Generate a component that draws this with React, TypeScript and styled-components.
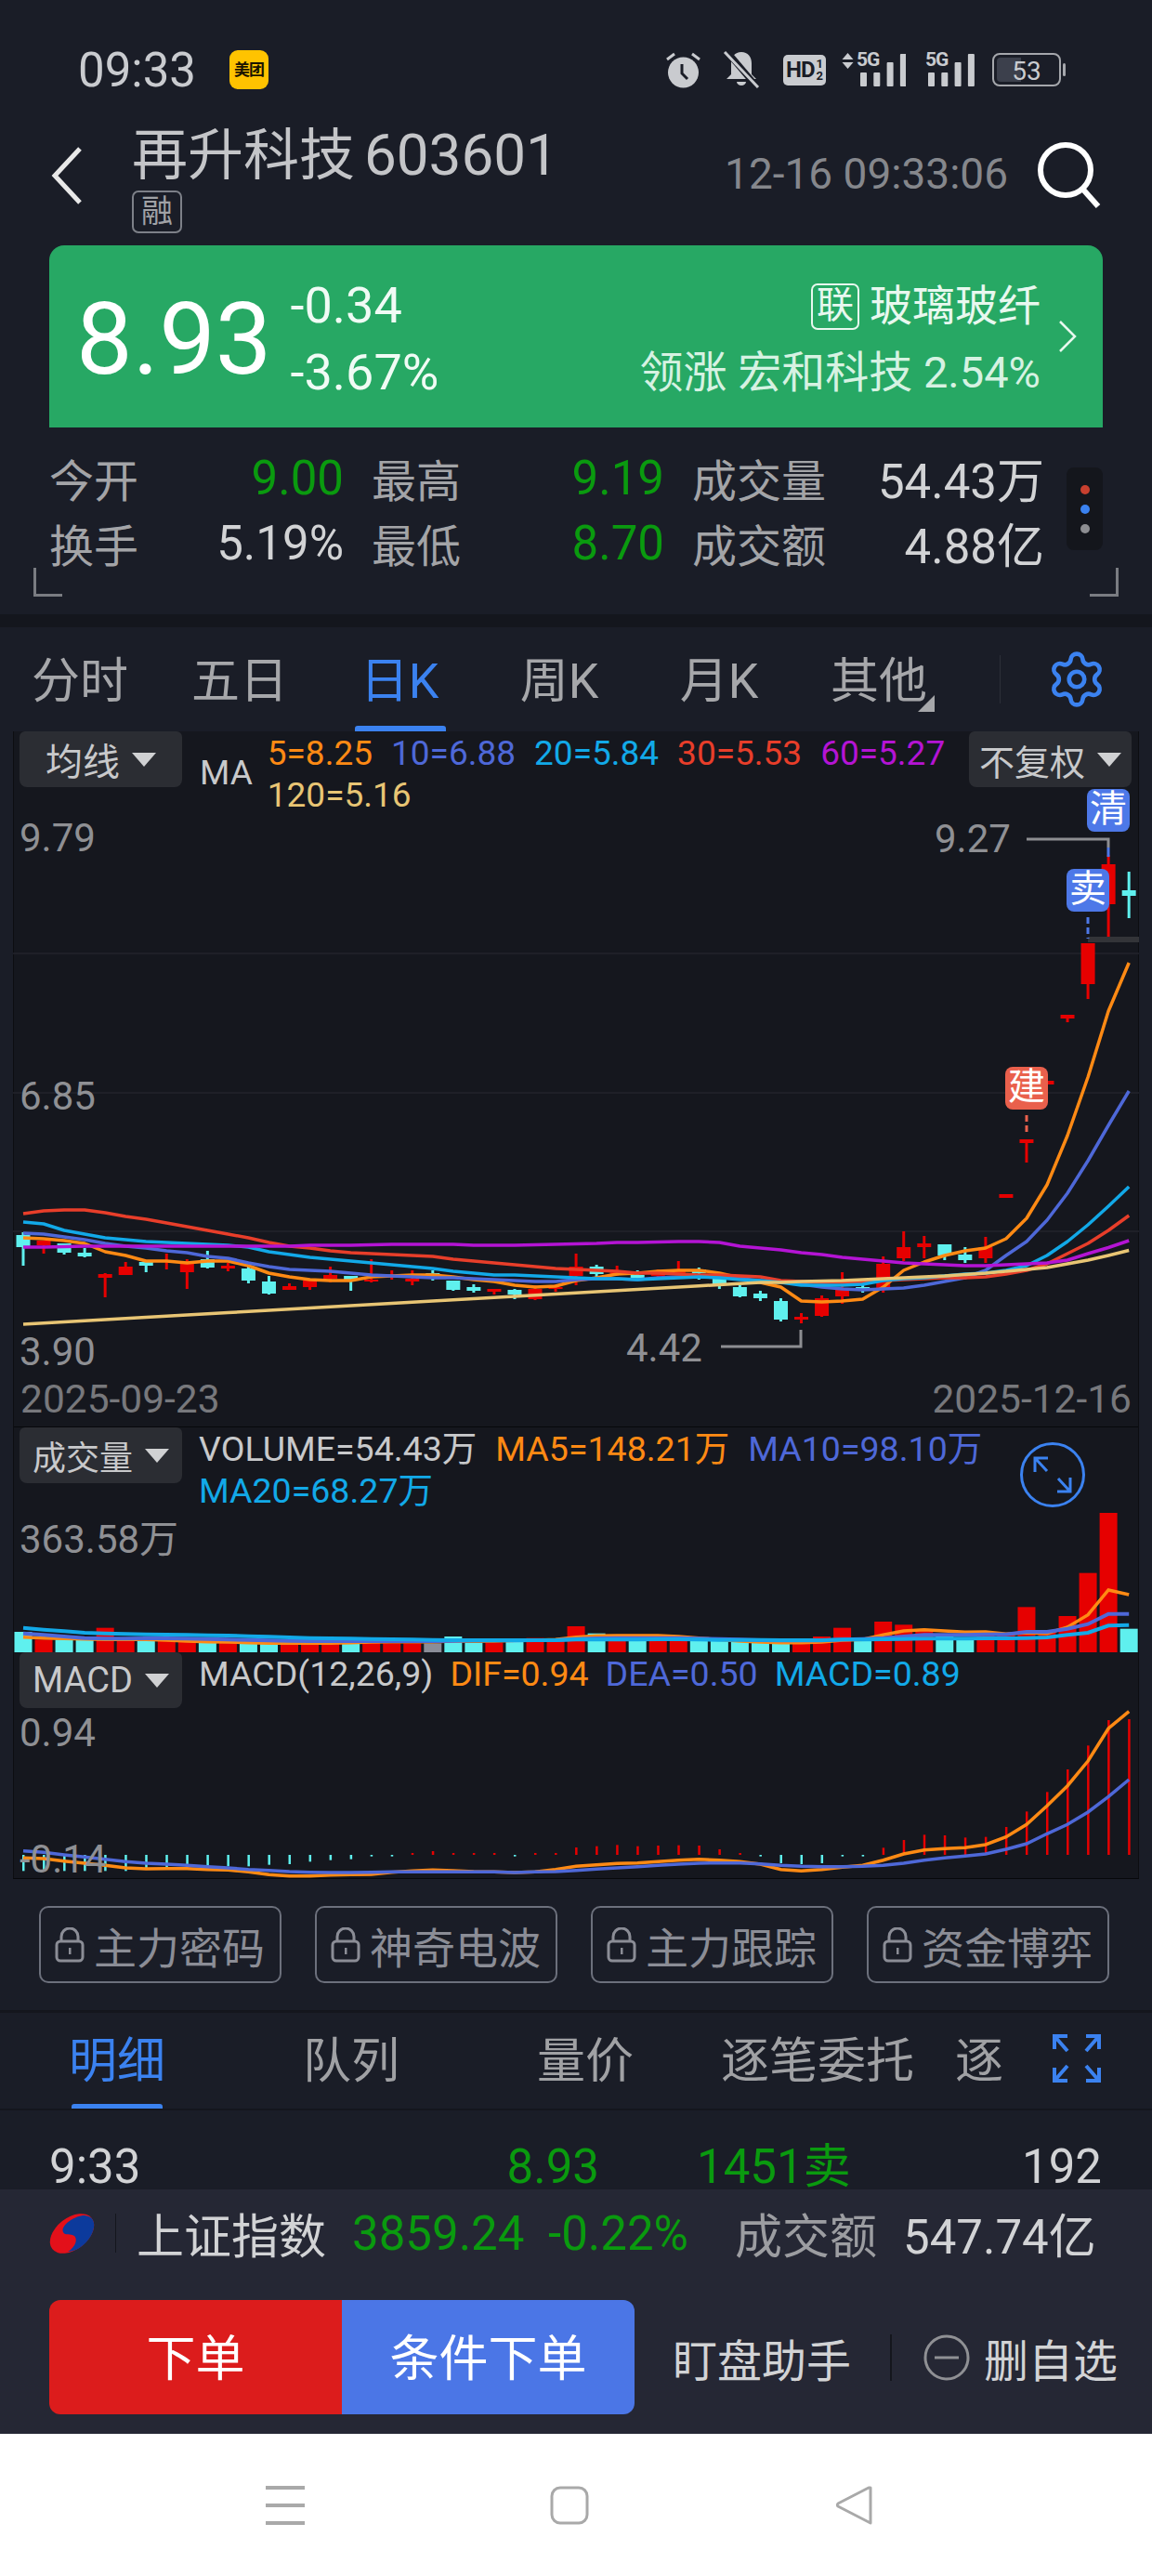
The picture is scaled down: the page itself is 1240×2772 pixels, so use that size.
import styled, { createGlobalStyle } from "styled-components";
import { Settings } from "lucide-react";

const GlobalStyle = createGlobalStyle`
  html, body {
    margin: 0;
    padding: 0;
    background: #1a1d27;
  }
  * {
    box-sizing: border-box;
  }
`;

const RED = "#e60000";
const CYAN = "#5ff0ee";
const BLUE = "#3b82f0";
const GREEN = "#0a9a0f";
const ICON = "#c9cbcf";

const Page = styled.div`
  width: 1240px;
  height: 2772px;
  overflow: hidden;
  display: flex;
  flex-direction: column;
  background: #1a1d27;
  color: #cfcfcf;
  font-family: Roboto, "Noto Sans CJK SC", sans-serif;
`;

/* status bar */
const StatusBar = styled.div`
  height: 134px;
  padding: 16px 94px 0 84px;
  display: flex;
  align-items: center;
`;

const Clock = styled.div`
  font-size: 51px;
  color: ${ICON};
`;

const AppBadge = styled.div`
  width: 42px;
  height: 42px;
  margin-left: 36px;
  border-radius: 9px;
  background: #ffc300;
  color: #1a1400;
  font-size: 17px;
  font-weight: 700;
  line-height: 42px;
  text-align: center;
  letter-spacing: -1px;
`;

const StatusIcons = styled.div`
  margin-left: auto;
  display: flex;
  align-items: center;
`;

const AlarmIcon = styled.svg`
  margin-right: 24px;
`;

const HdBadge = styled.div`
  width: 46px;
  height: 33px;
  margin: 0 17px 0 25px;
  border-radius: 5px;
  background: ${ICON};
  color: #1a1d27;
  font-size: 24px;
  font-weight: 700;
  display: flex;
  align-items: center;
  justify-content: center;
  letter-spacing: -1px;
`;

const HdFraction = styled.span`
  display: flex;
  flex-direction: column;
  align-items: center;
  margin-left: 2px;
  font-size: 13px;
  line-height: 13px;
  letter-spacing: 0;
`;

const SignalWrap = styled.div<{ $gap: number }>`
  position: relative;
  height: 36px;
  margin-right: ${(p) => p.$gap}px;
`;

const SignalLabel = styled.span<{ $left: number }>`
  position: absolute;
  left: ${(p) => p.$left}px;
  top: -4px;
  font-size: 21px;
  font-weight: 700;
  color: ${ICON};
  letter-spacing: -1px;
  line-height: 22px;
`;

const SignalArrows = styled.svg`
  position: absolute;
  left: 0;
  top: 0;
`;

const Battery = styled.div`
  position: relative;
  width: 74px;
  height: 36px;
  margin-right: 4px;
  border: 2.5px solid #a5a7ac;
  border-radius: 8px;
  padding: 3px;
  color: ${ICON};
  font-size: 28px;
  line-height: 30px;
  text-align: center;

  &::after {
    content: "";
    position: absolute;
    right: -7px;
    top: 9px;
    width: 3px;
    height: 14px;
    border-radius: 2px;
    background: #a5a7ac;
  }
`;

const BatteryFill = styled.div`
  position: absolute;
  left: 3px;
  top: 3px;
  bottom: 3px;
  width: 26px;
  border-radius: 4px 0 0 4px;
  background: #3c404c;
`;

const BatteryText = styled.span`
  position: relative;
`;

/* stock header */
const Header = styled.div`
  height: 130px;
  padding: 0 54px;
  display: flex;
  align-items: flex-start;
`;

const BackIcon = styled.svg`
  width: 36px;
  height: 66px;
  margin-top: 22px;
  flex: none;
`;

const TitleBlock = styled.div`
  margin-left: 52px;
`;

const Title = styled.div`
  font-size: 60px;
  line-height: 66px;
  color: #c4c5c8;
  white-space: nowrap;
  word-spacing: -5px;
`;

const TitleCode = styled.span`
  font-size: 62px;
`;

const MarginBadge = styled.div`
  width: 54px;
  height: 46px;
  margin-top: 4px;
  border: 2px solid #7d8088;
  border-radius: 7px;
  color: #a0a2a6;
  font-size: 34px;
  line-height: 40px;
  text-align: center;
`;

const HeaderRight = styled.div`
  margin-left: auto;
  margin-top: 16px;
  display: flex;
  align-items: center;
`;

const Timestamp = styled.div`
  font-size: 46px;
  color: #85878c;
  white-space: nowrap;
`;

const SearchIcon = styled.svg`
  width: 72px;
  height: 74px;
  margin-left: 29px;
`;

/* price card */
const PriceCard = styled.div`
  height: 196px;
  margin: 0 53px;
  padding: 6px 27px 0 29px;
  display: flex;
  align-items: center;
  background: #27a864;
  border-radius: 16px 16px 0 0;
  color: #fff;
`;

const PriceValue = styled.div`
  font-size: 108px;
  line-height: 1;
`;

const Deltas = styled.div`
  margin-left: 20px;
  font-size: 54px;
  line-height: 72px;
  color: #f0fbf5;
`;

const Sector = styled.div`
  margin-left: auto;
  text-align: right;
  font-size: 47px;
  line-height: 71px;
  color: #d6f2e2;
`;

const SectorTop = styled.div`
  display: flex;
  align-items: center;
  justify-content: flex-end;
  font-size: 46px;
  color: #e8f8ef;
`;

const SectorMark = styled.span`
  width: 52px;
  height: 50px;
  margin-right: 11px;
  border: 2px solid #e8f8ef;
  border-radius: 7px;
  font-size: 40px;
  line-height: 44px;
  text-align: center;
`;

const CardChevron = styled.svg`
  width: 22px;
  height: 36px;
  margin: -6px 0 0 18px;
  flex: none;
`;

/* quote stats */
const Stats = styled.div`
  position: relative;
  height: 201px;
  padding: 19px 0 0 53px;
`;

const StatsGrid = styled.div`
  display: grid;
  grid-template-columns: 100px 217px 125px 220px 180px 229px;
  grid-auto-rows: 70px;
  align-items: center;
  font-size: 48px;
`;

const StatLabel = styled.div<{ $indent?: number }>`
  color: #a3a4a7;
  padding-left: ${(p) => p.$indent ?? 0}px;
  white-space: nowrap;
`;

const StatValue = styled.div<{ $green?: boolean }>`
  text-align: right;
  font-size: 51px;
  white-space: nowrap;
  color: ${(p) => (p.$green ? GREEN : "#d2d3d5")};
`;

const DotsPill = styled.div`
  position: absolute;
  left: 1148px;
  top: 43px;
  width: 39px;
  height: 89px;
  border-radius: 8px;
  background: #14161c;
  display: flex;
  flex-direction: column;
  align-items: center;
  justify-content: center;
  gap: 11px;
`;

const Dot = styled.span<{ $color: string }>`
  width: 10px;
  height: 10px;
  border-radius: 50%;
  background: ${(p) => p.$color};
`;

const Bracket = styled.span<{ $right?: boolean }>`
  position: absolute;
  top: 151px;
  ${(p) => (p.$right ? "left: 1173px;" : "left: 36px;")}
  width: 31px;
  height: 31px;
  border-bottom: 3px solid #7a7c82;
  ${(p) => (p.$right ? "border-right: 3px solid #7a7c82;" : "border-left: 3px solid #7a7c82;")}
`;

const Band = styled.div`
  height: 14px;
  background: #14161d;
  flex: none;
`;

/* period tabs */
const PeriodBar = styled.div`
  height: 112px;
  display: flex;
  align-items: center;
  flex: none;
`;

const PeriodTab = styled.div<{ $active?: boolean }>`
  position: relative;
  width: 172px;
  height: 112px;
  font-size: 52px;
  line-height: 118px;
  text-align: center;
  color: ${(p) => (p.$active ? BLUE : "#a6a7aa")};

  &::after {
    content: "";
    display: ${(p) => (p.$active ? "block" : "none")};
    position: absolute;
    left: 38px;
    bottom: 0;
    width: 98px;
    height: 6px;
    border-radius: 3px 3px 0 0;
    background: ${BLUE};
  }
`;

const CornerMark = styled.span`
  position: absolute;
  right: 26px;
  bottom: 21px;
  width: 0;
  height: 0;
  border-left: 18px solid transparent;
  border-bottom: 18px solid #a6a7aa;
`;

const PeriodDivider = styled.div`
  width: 1px;
  height: 52px;
  margin-left: 44px;
  background: #2c2f38;
`;

const GearWrap = styled.div`
  margin-left: 49px;
  display: flex;
  color: ${BLUE};
`;

/* chart panel */
const ChartPanel = styled.div`
  width: 1212px;
  height: 1235px;
  margin-left: 14px;
  background: #15171e;
  border-left: 1px solid #0c0d11;
  border-right: 1px solid #0c0d11;
  border-bottom: 1px solid #07080b;
  flex: none;
`;

const Pane = styled.div<{ $h: number; $divider?: boolean }>`
  position: relative;
  height: ${(p) => p.$h}px;
  border-top: ${(p) => (p.$divider ? "1px solid #07080b" : "none")};
`;

const PaneSvg = styled.svg`
  position: absolute;
  left: -1px;
  top: 0;
`;

const LegendRow = styled.div`
  position: relative;
  display: flex;
  align-items: flex-start;
  padding: 0 7px 0 6px;
`;

const DropBtn = styled.div<{ $size?: number }>`
  width: 175px;
  height: 60px;
  flex: none;
  border-radius: 6px 6px 8px 8px;
  background: #2b2d33;
  color: #c8c9cb;
  font-size: ${(p) => p.$size ?? 38}px;
  display: flex;
  align-items: center;
  justify-content: center;
  gap: 13px;
  white-space: nowrap;
`;

const DropCaret = styled.span`
  width: 0;
  height: 0;
  flex: none;
  border-left: 13px solid transparent;
  border-right: 13px solid transparent;
  border-top: 15px solid #d0d1d3;
`;

const MaTag = styled.div`
  margin: 22px 0 0 19px;
  font-size: 37px;
  line-height: 45px;
  color: #c8c9cb;
`;

const LegendItems = styled.div<{ $w: number; $left: number; $size: number; $gap: number }>`
  width: ${(p) => p.$w}px;
  margin-left: ${(p) => p.$left}px;
  display: flex;
  flex-wrap: wrap;
  column-gap: ${(p) => p.$gap}px;
  font-size: ${(p) => p.$size}px;
  line-height: 45px;
  padding-top: 1px;
  white-space: nowrap;
`;

const LegendItem = styled.span<{ $color: string }>`
  color: ${(p) => p.$color};
`;

const RightBtn = styled(DropBtn)`
  margin-left: auto;
`;

const AxisLabel = styled.div<{ $x: number; $y: number }>`
  position: absolute;
  left: ${(p) => p.$x}px;
  top: ${(p) => p.$y}px;
  font-size: 42px;
  line-height: 40px;
  color: #8f9094;
  white-space: nowrap;
`;

const Tag = styled.div<{ $x: number; $y: number; $color: string }>`
  position: absolute;
  left: ${(p) => p.$x}px;
  top: ${(p) => p.$y}px;
  width: 46px;
  height: 46px;
  border-radius: 8px;
  background: ${(p) => p.$color};
  color: #fff;
  font-size: 40px;
  line-height: 44px;
  text-align: center;
`;

const DateRow = styled.div`
  height: 60px;
  padding: 0 7px;
  display: flex;
  justify-content: space-between;
  align-items: center;
  font-size: 42.5px;
  color: #77787c;
`;

const ZoomIcon = styled.svg`
  position: absolute;
  left: 1082px;
  top: 15px;
`;

/* feature buttons */
const Features = styled.div`
  height: 141px;
  padding: 29px 0 0 42px;
  display: grid;
  grid-template-columns: repeat(4, 261px);
  column-gap: 36px;
  flex: none;
`;

const FeatureBtn = styled.div`
  height: 83px;
  border: 2px solid #6c707c;
  border-radius: 10px;
  display: flex;
  align-items: center;
  padding-left: 15px;
  gap: 10px;
  color: #8b8d96;
  font-size: 46px;
  white-space: nowrap;
`;

const LockIcon = styled.svg`
  flex: none;
`;

/* detail tabs */
const DetailBar = styled.div`
  height: 108px;
  border-top: 3px solid #14161d;
  border-bottom: 2px solid #14161d;
  display: flex;
  align-items: center;
  flex: none;
`;

const DetailStrip = styled.div`
  width: 1078px;
  overflow: hidden;
  display: flex;
  flex: none;
`;

const DetailTab = styled.div<{ $active?: boolean; $shift?: number }>`
  position: relative;
  width: 252px;
  height: 103px;
  flex: none;
  font-size: 52px;
  line-height: 106px;
  text-align: center;
  white-space: nowrap;
  color: ${(p) => (p.$active ? BLUE : "#a0a1a4")};
  margin-left: ${(p) => p.$shift ?? 0}px;

  &::after {
    content: "";
    display: ${(p) => (p.$active ? "block" : "none")};
    position: absolute;
    left: 77px;
    bottom: 0;
    width: 98px;
    height: 5px;
    border-radius: 3px 3px 0 0;
    background: ${BLUE};
  }
`;

const ExpandIcon = styled.svg`
  margin-left: 55px;
  margin-top: -6px;
`;

const TradeRow = styled.div`
  height: 85px;
  flex: none;
  overflow: hidden;
  padding: 34px 54px 0 53px;
  display: flex;
  font-size: 51px;
  line-height: 54px;
  color: #d2d3d5;
`;

const TradeTime = styled.div`
  width: 302px;
`;

const TradePrice = styled.div`
  width: 290px;
  text-align: right;
  color: ${GREEN};
`;

const TradeVolume = styled.div`
  margin-left: 105px;
  color: ${GREEN};
  white-space: nowrap;
`;

const TradeCount = styled.div`
  margin-left: auto;
`;

/* bottom dock */
const Dock = styled.div`
  height: 263px;
  flex: none;
  background: #252734;
`;

const Ticker = styled.div`
  height: 92px;
  margin-top: 1px;
  padding-left: 53px;
  display: flex;
  align-items: center;
  font-size: 51px;
  white-space: nowrap;
`;

const TickerDivider = styled.span`
  width: 1px;
  height: 42px;
  margin: 0 22px 0 22px;
  background: #14161d;
`;

const TickerName = styled.span`
  color: #d2d3d5;
  width: 232px;
`;

const TickerChange = styled.span`
  color: ${GREEN};
  word-spacing: 13px;
`;

const TickerLabel = styled.span`
  color: #9c9da1;
  margin-left: 50px;
`;

const TickerAmount = styled.span`
  color: #d2d3d5;
  margin-left: 28px;
`;

const Actions = styled.div`
  margin-top: 26px;
  padding-left: 53px;
  display: flex;
  align-items: center;
`;

const OrderBtn = styled.div<{ $color: string; $side: "left" | "right" }>`
  width: 315px;
  height: 123px;
  background: ${(p) => p.$color};
  border-radius: ${(p) => (p.$side === "left" ? "12px 0 0 12px" : "0 12px 12px 0")};
  color: #fff;
  font-size: 53px;
  line-height: 129px;
  text-align: center;
  overflow: hidden;
`;

const ActionText = styled.div`
  font-size: 48px;
  color: #d2d3d5;
  white-space: nowrap;
`;

const HelperText = styled(ActionText)`
  margin-left: 41px;
`;

const ActionDivider = styled.div`
  width: 2px;
  height: 50px;
  margin: 0 34px 0 42px;
  background: #14161d;
`;

const MinusIcon = styled.svg`
  margin-right: 15px;
  flex: none;
`;

/* android nav */
const NavBar = styled.div`
  flex: 1;
  background: #fff;
  padding-right: 15px;
  display: flex;
  justify-content: center;
  align-items: center;
`;

const NavCell = styled.div`
  width: 306px;
  display: flex;
  justify-content: center;
`;

/* chart data */
const cx = (i: number) => 25 + 22.04 * i;

// [index, up?, wickTop, bodyTop, bodyBottom, wickBottom]
const candles: [number, boolean, number, number, number, number][] = [
  [0, false, 1326, 1329, 1342, 1362],
  [1, true, 1335, 1335, 1340, 1349],
  [2, false, 1338, 1338, 1348, 1350],
  [3, false, 1343, 1348, 1352, 1353],
  [4, true, 1370, 1371, 1375, 1396],
  [5, true, 1358, 1363, 1372, 1372],
  [6, false, 1358, 1358, 1362, 1369],
  [7, true, 1349, 1356, 1358, 1366],
  [8, true, 1355, 1358, 1369, 1387],
  [9, false, 1346, 1355, 1364, 1365],
  [10, true, 1359, 1362, 1365, 1368],
  [11, false, 1363, 1365, 1378, 1381],
  [12, false, 1373, 1379, 1392, 1393],
  [13, true, 1381, 1384, 1388, 1388],
  [14, true, 1378, 1378, 1385, 1388],
  [15, true, 1363, 1372, 1376, 1380],
  [16, false, 1373, 1373, 1377, 1389],
  [17, true, 1355, 1377, 1379, 1380],
  [18, true, 1367, 1372, 1374, 1377],
  [19, true, 1367, 1376, 1379, 1383],
  [20, false, 1367, 1370, 1375, 1378],
  [21, false, 1378, 1378, 1388, 1389],
  [22, false, 1382, 1385, 1389, 1391],
  [23, true, 1387, 1387, 1390, 1393],
  [24, false, 1387, 1388, 1393, 1398],
  [25, true, 1383, 1387, 1398, 1399],
  [26, true, 1382, 1385, 1387, 1390],
  [27, true, 1349, 1363, 1373, 1383],
  [28, false, 1361, 1363, 1371, 1374],
  [29, true, 1362, 1368, 1372, 1373],
  [30, false, 1367, 1372, 1375, 1378],
  [31, true, 1366, 1368, 1373, 1374],
  [32, true, 1357, 1367, 1370, 1370],
  [33, false, 1364, 1366, 1370, 1377],
  [34, false, 1376, 1376, 1382, 1387],
  [35, false, 1383, 1385, 1395, 1396],
  [36, false, 1389, 1392, 1397, 1400],
  [37, false, 1397, 1400, 1420, 1422],
  [38, true, 1413, 1417, 1420, 1424],
  [39, true, 1394, 1397, 1416, 1417],
  [40, true, 1369, 1386, 1395, 1403],
  [41, false, 1382, 1385, 1388, 1391],
  [42, true, 1352, 1360, 1387, 1391],
  [43, true, 1325, 1342, 1354, 1357],
  [44, true, 1330, 1338, 1342, 1354],
  [45, false, 1339, 1339, 1351, 1356],
  [46, false, 1342, 1350, 1356, 1359],
  [47, true, 1331, 1342, 1354, 1359],
  [48, true, 1285, 1285, 1289, 1289],
  [49, true, 1226, 1226, 1230, 1251],
  [50, true, 1163, 1163, 1167, 1167],
  [51, true, 1092, 1092, 1096, 1100],
  [52, true, 1015, 1015, 1059, 1075],
  [53, true, 920, 930, 973, 1008],
  [54, false, 938, 958, 964, 988],
];

const ma5 = [
  1332, 1333, 1335, 1338, 1347, 1351, 1357, 1357, 1359, 1357, 1357, 1362, 1370, 1374, 1377, 1378, 1378, 1374, 1373,
  1372, 1372, 1374, 1377, 1379, 1383, 1385, 1384, 1378, 1375, 1371, 1370, 1368, 1367, 1367, 1370, 1375, 1380, 1385,
  1400, 1401, 1400, 1398, 1385, 1367, 1358, 1351, 1346, 1343, 1333, 1311, 1275, 1222, 1159, 1088, 1036,
];
const ma10 = [
  1327, 1328, 1331, 1334, 1338, 1341, 1343, 1346, 1348, 1352, 1354, 1359, 1363, 1366, 1367, 1368, 1370, 1372, 1373,
  1374, 1375, 1375, 1376, 1377, 1378, 1379, 1379, 1377, 1376, 1376, 1377, 1375, 1374, 1373, 1374, 1376, 1378, 1379,
  1382, 1385, 1387, 1388, 1387, 1386, 1383, 1379, 1375, 1367, 1351, 1336, 1313, 1284, 1249, 1211, 1174,
];
const ma20 = [
  1315, 1317, 1324, 1328, 1332, 1334, 1336, 1337, 1338, 1339, 1340, 1342, 1347, 1350, 1353, 1355, 1357, 1359, 1361,
  1363, 1365, 1368, 1370, 1372, 1372, 1373, 1374, 1375, 1376, 1376, 1377, 1376, 1375, 1374, 1375, 1377, 1378, 1380,
  1383, 1383, 1383, 1382, 1378, 1376, 1375, 1373, 1371, 1370, 1367, 1362, 1351, 1336, 1318, 1298, 1277,
];
const ma30 = [
  1306, 1303, 1302, 1302, 1305, 1309, 1312, 1316, 1320, 1324, 1328, 1332, 1337, 1341, 1343, 1346, 1348, 1349, 1350,
  1351, 1352, 1355, 1357, 1359, 1361, 1363, 1365, 1366, 1367, 1368, 1370, 1370, 1371, 1372, 1372, 1373, 1374, 1378,
  1379, 1380, 1380, 1380, 1378, 1377, 1376, 1375, 1375, 1374, 1371, 1367, 1360, 1349, 1338, 1324, 1308,
];
const ma60 = [
  1342, 1342, 1341.5, 1341, 1341, 1341, 1341, 1341, 1341, 1341, 1341, 1341, 1341, 1341, 1340, 1340, 1340, 1339.5, 1339,
  1339, 1339, 1339, 1340, 1340, 1340, 1339.5, 1339, 1338.5, 1338, 1337, 1337, 1336.5, 1336, 1336, 1337, 1341, 1343,
  1345, 1348, 1350, 1353, 1355, 1357, 1359, 1360, 1361, 1362, 1362, 1361, 1360, 1359, 1356, 1349, 1342.5, 1335,
];
const ma120 = [
  ...Array.from({ length: 37 }, (_, i) => 1425 - (45 * i) / 36),
  1380, 1379, 1378.5, 1378, 1377, 1376, 1375, 1374, 1373, 1371.5, 1370, 1368, 1366, 1364, 1360, 1356, 1351, 1345.5,
];

const maLines: [number[], string][] = [
  [ma5, "#ff8a14"],
  [ma10, "#4e68d8"],
  [ma30, "#e83e2a"],
  [ma20, "#12a9e8"],
  [ma60, "#b414d4"],
  [ma120, "#e8c574"],
];

// top of each volume bar
const volTops = [
  765, 790, 790, 790, 752, 790, 790, 792, 790, 795, 800, 800, 800, 800, 800, 800, 800, 800, 802, 802, 802, 780, 800,
  800, 790, 785, 790, 747, 770, 780, 780, 775, 785, 785, 785, 790, 790, 795, 795, 780, 752, 795, 732, 742, 760, 780,
  785, 770, 770, 685, 760, 714, 575, 381, 755,
];
const volDown = new Set([0, 2, 3, 6, 9, 11, 12, 16, 21, 22, 24, 28, 30, 33, 34, 35, 36, 37, 41, 45, 46, 54]);

const volMa20 = [
  752, 758, 763, 768, 770, 772, 773, 774, 775, 776, 777, 779, 781, 783, 785, 786, 787, 788, 789, 790, 791, 792, 792,
  792, 792, 792, 792, 790, 790, 790, 790, 789, 789, 790, 791, 791, 791, 792, 792, 792, 790, 790, 789, 788, 787, 787,
  787, 786, 786, 785, 783, 775, 768, 745, 743,
];
const volMa10 = [
  770, 775, 780, 785, 787, 787, 786, 786, 787, 788, 790, 791, 793, 794, 795, 795, 795, 795, 795, 795, 795, 794, 793,
  793, 793, 792, 792, 788, 786, 785, 785, 785, 785, 787, 788, 790, 792, 793, 793, 793, 790, 788, 785, 780, 775, 775,
  775, 773, 773, 765, 765, 755, 740, 707, 707,
];
const volMa5 = [
  782, 785, 787, 788, 790, 790, 790, 792, 795, 797, 798, 800, 802, 802, 802, 802, 800, 798, 797, 797, 797, 795, 795,
  795, 793, 792, 790, 782, 778, 777, 777, 777, 780, 785, 790, 795, 798, 800, 800, 798, 792, 790, 775, 762, 758, 762,
  766, 765, 772, 768, 770, 750, 710, 630, 645,
];

const macdBars = [
  700, 700, 700, 700, 700, 700, 690, 690, 688, 688, 685, 685, 680, 678, 670, 665, 662, 653, 653, 642, 636, 642, 642,
  642, 653, 642, 642, 624, 620, 616, 620, 618, 617, 618, 630, 642, 653, 675, 678, 675, 653, 653, 625, 600, 583, 585,
  592, 590, 558, 508, 445, 372, 295, 213, 210,
];
const macdDif = [
  658, 660, 668, 675, 682, 690, 693, 692, 692, 695, 697, 703, 712, 716, 716, 713, 712, 711, 704, 700, 697, 699, 702,
  703, 705, 703, 695, 685, 680, 676, 674, 670, 665, 662, 665, 670, 678, 695, 700, 695, 688, 682, 665, 645, 632, 628,
  625, 615, 590, 550, 490, 425, 345, 240, 185,
];
const macdDea = [
  635, 640, 648, 655, 662, 670, 675, 678, 682, 686, 690, 695, 698, 702, 704, 705, 705, 704, 703, 703, 703, 703, 703,
  703, 705, 703, 702, 698, 694, 690, 686, 682, 678, 675, 674, 674, 677, 682, 685, 686, 686, 685, 682, 675, 665, 658,
  652, 645, 630, 612, 580, 550, 510, 460, 405,
];

const toPoints = (ys: number[], map: (v: number) => number = (v) => v) =>
  ys.map((y, i) => `${cx(i).toFixed(1)},${map(y).toFixed(1)}`).join(" ");

const volY = (v: number) => 1500 + v / 3;
const macdY = (v: number) => 1780 + v / 3;

function PriceChart() {
  return (
    <PaneSvg width="1212" height="688" viewBox="14 787 1212 688">
      {[1026, 1176, 1325].map((y) => (
        <line key={y} x1="14" x2="1226" y1={y} y2={y} stroke="#23252c" strokeWidth="1.5" />
      ))}
      <rect x="1171" y="1008" width="55" height="6" fill="#333438" />
      {candles.map(([i, up, wt, bt, bb, wb]) => {
        const color = up ? RED : CYAN;
        const x = cx(i);
        return (
          <g key={i}>
            <rect x={x - 1.5} y={wt} width="3" height={wb - wt} fill={color} />
            <rect x={x - 7.5} y={bt} width="15" height={bb - bt} fill={color} />
          </g>
        );
      })}
      {maLines.map(([ys, color]) => (
        <polyline key={color} points={toPoints(ys)} fill="none" stroke={color} strokeWidth="3.5" strokeLinejoin="round" />
      ))}
      <polyline points="1105,903 1193,903 1193,912" fill="none" stroke="#8d8e92" strokeWidth="3" />
      <line x1="1193" x2="1193" y1="912" y2="922" stroke="#4d78e8" strokeWidth="3" />
      <line x1="1171" x2="1171" y1="987" y2="1010" stroke="#4d78e8" strokeWidth="3" strokeDasharray="7 4" />
      <line x1="1105" x2="1105" y1="1200" y2="1222" stroke="#e9604c" strokeWidth="3" strokeDasharray="7 4" />
      <polyline points="776,1449 862,1449 862,1431" fill="none" stroke="#8d8e92" strokeWidth="3" />
    </PaneSvg>
  );
}

function VolumeChart() {
  return (
    <PaneSvg width="1212" height="243" viewBox="14 1535 1212 243">
      {volTops.map((t, i) => {
        const y = volY(t);
        const fill = i === 20 ? "#8a8d98" : volDown.has(i) ? CYAN : RED;
        return <rect key={i} x={cx(i) - 9.5} y={y} width="19" height={1777 - y} fill={fill} />;
      })}
      <polyline points={toPoints(volMa5, volY)} fill="none" stroke="#ff8a14" strokeWidth="3.5" />
      <polyline points={toPoints(volMa10, volY)} fill="none" stroke="#4e68d8" strokeWidth="4" />
      <polyline points={toPoints(volMa20, volY)} fill="none" stroke="#12a9e8" strokeWidth="4" />
    </PaneSvg>
  );
}

function MacdChart() {
  return (
    <PaneSvg width="1212" height="243" viewBox="14 1778 1212 243">
      {macdBars.map((v, i) => {
        const base = macdY(648);
        const y = macdY(v);
        const down = v > 648;
        return (
          <rect
            key={i}
            x={cx(i) - 1}
            y={Math.min(base, y)}
            width="2.5"
            height={Math.abs(y - base)}
            fill={down ? CYAN : RED}
          />
        );
      })}
      <polyline points={toPoints(macdDif, macdY)} fill="none" stroke="#ff8a14" strokeWidth="3.5" />
      <polyline points={toPoints(macdDea, macdY)} fill="none" stroke="#4e68d8" strokeWidth="3.5" />
    </PaneSvg>
  );
}

function Lock() {
  return (
    <LockIcon width="32" height="38" viewBox="0 0 32 38">
      <path d="M7 15V10a9 9 0 0 1 18 0v5" fill="none" stroke="#8b8d96" strokeWidth="3" />
      <rect x="2" y="15" width="28" height="21" rx="4" fill="none" stroke="#8b8d96" strokeWidth="3" />
      <rect x="15" y="22" width="2.5" height="7" fill="#8b8d96" />
    </LockIcon>
  );
}

function Signal({ width, start }: { width: number; start: number }) {
  const heights = [15, 15, 26, 35];
  return (
    <svg width={width} height="36" viewBox={`0 0 ${width} 36`}>
      {heights.map((h, i) => (
        <rect key={i} x={start + i * 14.3} y={36 - h} width="7" height={h} rx="1" fill={ICON} />
      ))}
    </svg>
  );
}

export default function App() {
  return (
    <Page>
      <GlobalStyle />
      <StatusBar>
        <Clock>09:33</Clock>
        <AppBadge>美团</AppBadge>
        <StatusIcons>
          <AlarmIcon width="37" height="40" viewBox="0 0 37 40">
            <circle cx="18.5" cy="23" r="16.5" fill={ICON} />
            <path d="M17 14v10l6 6" fill="none" stroke="#1a1d27" strokeWidth="3" />
            <path d="M1 9l8-6M36 9l-8-6" stroke={ICON} strokeWidth="3" />
          </AlarmIcon>
          <svg width="40" height="40" viewBox="0 0 40 40">
            <path d="M20 1c-7 0-11 5-11 12v12l-5 5h32l-5-5V13C31 6 27 1 20 1z" fill={ICON} />
            <path d="M15 33a5 4 0 0 0 10 0z" fill={ICON} />
            <path d="M4 0 38 40" stroke="#1a1d27" strokeWidth="7" />
            <path d="M2 1 38 39" stroke={ICON} strokeWidth="3" />
          </svg>
          <HdBadge>
            HD
            <HdFraction>
              <span>1</span>
              <span>2</span>
            </HdFraction>
          </HdBadge>
          <SignalWrap $gap={21}>
            <SignalArrows width="13" height="18" viewBox="0 0 13 18">
              <path d="M6.5 0l6 7H.5zM.5 10h12l-6 7z" fill={ICON} />
            </SignalArrows>
            <SignalLabel $left={16}>5G</SignalLabel>
            <Signal width={69} start={20} />
          </SignalWrap>
          <SignalWrap $gap={18}>
            <SignalLabel $left={0}>5G</SignalLabel>
            <Signal width={54} start={3} />
          </SignalWrap>
          <Battery>
            <BatteryFill />
            <BatteryText>53</BatteryText>
          </Battery>
        </StatusIcons>
      </StatusBar>

      <Header>
        <BackIcon viewBox="0 0 36 66">
          <path d="M32 4 5 33l27 29" fill="none" stroke="#e8e8e8" strokeWidth="5" />
        </BackIcon>
        <TitleBlock>
          <Title>
            再升科技 <TitleCode>603601</TitleCode>
          </Title>
          <MarginBadge>融</MarginBadge>
        </TitleBlock>
        <HeaderRight>
          <Timestamp>12-16 09:33:06</Timestamp>
          <SearchIcon viewBox="0 0 72 74">
            <circle cx="33" cy="33" r="27" fill="none" stroke="#fff" strokeWidth="6" />
            <path d="M52 54 68 72" stroke="#fff" strokeWidth="6" />
          </SearchIcon>
        </HeaderRight>
      </Header>

      <PriceCard>
        <PriceValue>8.93</PriceValue>
        <Deltas>
          <div>-0.34</div>
          <div>-3.67%</div>
        </Deltas>
        <Sector>
          <SectorTop>
            <SectorMark>联</SectorMark>玻璃玻纤
          </SectorTop>
          <div>领涨 宏和科技 2.54%</div>
        </Sector>
        <CardChevron viewBox="0 0 22 36">
          <path d="M3 2 19 18 3 34" fill="none" stroke="#e8f8ef" strokeWidth="2.5" />
        </CardChevron>
      </PriceCard>

      <Stats>
        <StatsGrid>
          <StatLabel>今开</StatLabel>
          <StatValue $green>9.00</StatValue>
          <StatLabel $indent={30}>最高</StatLabel>
          <StatValue $green>9.19</StatValue>
          <StatLabel $indent={30}>成交量</StatLabel>
          <StatValue>54.43万</StatValue>
          <StatLabel>换手</StatLabel>
          <StatValue>5.19%</StatValue>
          <StatLabel $indent={30}>最低</StatLabel>
          <StatValue $green>8.70</StatValue>
          <StatLabel $indent={30}>成交额</StatLabel>
          <StatValue>4.88亿</StatValue>
        </StatsGrid>
        <DotsPill>
          <Dot $color="#c8402f" />
          <Dot $color={BLUE} />
          <Dot $color="#8d8e92" />
        </DotsPill>
        <Bracket />
        <Bracket $right />
      </Stats>
      <Band />

      <PeriodBar>
        <PeriodTab>分时</PeriodTab>
        <PeriodTab>五日</PeriodTab>
        <PeriodTab $active>日K</PeriodTab>
        <PeriodTab>周K</PeriodTab>
        <PeriodTab>月K</PeriodTab>
        <PeriodTab>
          其他
          <CornerMark />
        </PeriodTab>
        <PeriodDivider />
        <GearWrap>
          <Settings size={66} strokeWidth={1.7} />
        </GearWrap>
      </PeriodBar>

      <ChartPanel>
        <Pane $h={688}>
          <PriceChart />
          <LegendRow>
            <DropBtn $size={40}>
              均线
              <DropCaret />
            </DropBtn>
            <MaTag>MA</MaTag>
            <LegendItems $w={740} $left={16} $size={37} $gap={20}>
              <LegendItem $color="#ff8a14">5=8.25</LegendItem>
              <LegendItem $color="#4e68d8">10=6.88</LegendItem>
              <LegendItem $color="#12a9e8">20=5.84</LegendItem>
              <LegendItem $color="#e83e2a">30=5.53</LegendItem>
              <LegendItem $color="#b414d4">60=5.27</LegendItem>
              <LegendItem $color="#e8c574">120=5.16</LegendItem>
            </LegendItems>
            <RightBtn>
              不复权
              <DropCaret />
            </RightBtn>
          </LegendRow>
          <AxisLabel $x={6} $y={95}>9.79</AxisLabel>
          <AxisLabel $x={6} $y={373}>6.85</AxisLabel>
          <AxisLabel $x={6} $y={648}>3.90</AxisLabel>
          <AxisLabel $x={991} $y={96}>9.27</AxisLabel>
          <AxisLabel $x={659} $y={644}>4.42</AxisLabel>
          <Tag $x={1155} $y={62} $color="#4d78e8">清</Tag>
          <Tag $x={1133} $y={148} $color="#4d78e8">卖</Tag>
          <Tag $x={1067} $y={361} $color="#e9604c">建</Tag>
        </Pane>
        <DateRow>
          <span>2025-09-23</span>
          <span>2025-12-16</span>
        </DateRow>
        <Pane $h={243} $divider>
          <VolumeChart />
          <LegendRow>
            <DropBtn $size={36}>
              成交量
              <DropCaret />
            </DropBtn>
            <LegendItems $w={860} $left={18} $size={37.5} $gap={20}>
              <LegendItem $color="#c8c9cb">VOLUME=54.43万</LegendItem>
              <LegendItem $color="#ff8a14">MA5=148.21万</LegendItem>
              <LegendItem $color="#4e68d8">MA10=98.10万</LegendItem>
              <LegendItem $color="#12a9e8">MA20=68.27万</LegendItem>
            </LegendItems>
          </LegendRow>
          <AxisLabel $x={6} $y={101}>363.58万</AxisLabel>
          <ZoomIcon width="72" height="72" viewBox="0 0 72 72">
            <circle cx="36" cy="36" r="33.5" fill="none" stroke={BLUE} strokeWidth="3" />
            <path d="M17 33V18h14M18 19l12 13M55 39v15H41M54 53 42 40" fill="none" stroke={BLUE} strokeWidth="3" />
          </ZoomIcon>
        </Pane>
        <Pane $h={243}>
          <MacdChart />
          <LegendRow>
            <DropBtn>
              MACD
              <DropCaret />
            </DropBtn>
            <LegendItems $w={860} $left={18} $size={37.5} $gap={18}>
              <LegendItem $color="#c8c9cb">MACD(12,26,9)</LegendItem>
              <LegendItem $color="#ff8a14">DIF=0.94</LegendItem>
              <LegendItem $color="#4e68d8">DEA=0.50</LegendItem>
              <LegendItem $color="#12a9e8">MACD=0.89</LegendItem>
            </LegendItems>
          </LegendRow>
          <AxisLabel $x={6} $y={67}>0.94</AxisLabel>
          <AxisLabel $x={6} $y={203}>-0.14</AxisLabel>
        </Pane>
      </ChartPanel>

      <Features>
        {["主力密码", "神奇电波", "主力跟踪", "资金博弈"].map((label) => (
          <FeatureBtn key={label}>
            <Lock />
            {label}
          </FeatureBtn>
        ))}
      </Features>

      <DetailBar>
        <DetailStrip>
          <DetailTab $active>明细</DetailTab>
          <DetailTab>队列</DetailTab>
          <DetailTab>量价</DetailTab>
          <DetailTab $shift={-2}>逐笔委托</DetailTab>
          <DetailTab>逐笔成交</DetailTab>
        </DetailStrip>
        <ExpandIcon width="52" height="52" viewBox="0 0 52 52" fill="none" stroke={BLUE} strokeWidth="4">
          <path d="M2 16V2h14M2 2l14 16M50 16V2H36M50 2 36 18M2 36v14h14M2 50l14-16M50 36v14H36M50 50 36 34" />
        </ExpandIcon>
      </DetailBar>

      <TradeRow>
        <TradeTime>9:33</TradeTime>
        <TradePrice>8.93</TradePrice>
        <TradeVolume>1451卖</TradeVolume>
        <TradeCount>192</TradeCount>
      </TradeRow>

      <Dock>
        <Ticker>
          <svg width="49" height="43" viewBox="0 0 49 43">
            <ellipse cx="24.5" cy="21.5" rx="27" ry="17" transform="rotate(-38 24.5 21.5)" fill="#e3101a" />
            <path d="M36 2C24 4 12 14 15 20c2 4 8 1 12 4 4 4 1 12-7 17 16-1 30-19 28-31-1-6-6-8-12-8z" fill="#0c3a9c" />
          </svg>
          <TickerDivider />
          <TickerName>上证指数</TickerName>
          <TickerChange>3859.24 -0.22%</TickerChange>
          <TickerLabel>成交额</TickerLabel>
          <TickerAmount>547.74亿</TickerAmount>
        </Ticker>
        <Actions>
          <OrderBtn $color="#dc1c1c" $side="left">下单</OrderBtn>
          <OrderBtn $color="#4b76e6" $side="right">条件下单</OrderBtn>
          <HelperText>盯盘助手</HelperText>
          <ActionDivider />
          <MinusIcon width="50" height="50" viewBox="0 0 50 50">
            <circle cx="25" cy="25" r="23" fill="none" stroke="#8f9094" strokeWidth="3" />
            <path d="M12 25h26" stroke="#8f9094" strokeWidth="3" />
          </MinusIcon>
          <ActionText>删自选</ActionText>
        </Actions>
      </Dock>

      <NavBar>
        <NavCell>
          <svg width="42" height="42" viewBox="0 0 42 42" fill="#a9a9a9">
            <rect y="0" width="42" height="4" />
            <rect y="19" width="42" height="4" />
            <rect y="38" width="42" height="4" />
          </svg>
        </NavCell>
        <NavCell>
          <svg width="42" height="42" viewBox="0 0 42 42">
            <rect x="2" y="2" width="38" height="38" rx="9" fill="none" stroke="#a9a9a9" strokeWidth="3" />
          </svg>
        </NavCell>
        <NavCell>
          <svg width="40" height="42" viewBox="0 0 40 42">
            <path d="M38 2v38L3 22a2 2 0 0 1 0-3L36 2z" fill="none" stroke="#a9a9a9" strokeWidth="3" strokeLinejoin="round" />
          </svg>
        </NavCell>
      </NavBar>
    </Page>
  );
}
